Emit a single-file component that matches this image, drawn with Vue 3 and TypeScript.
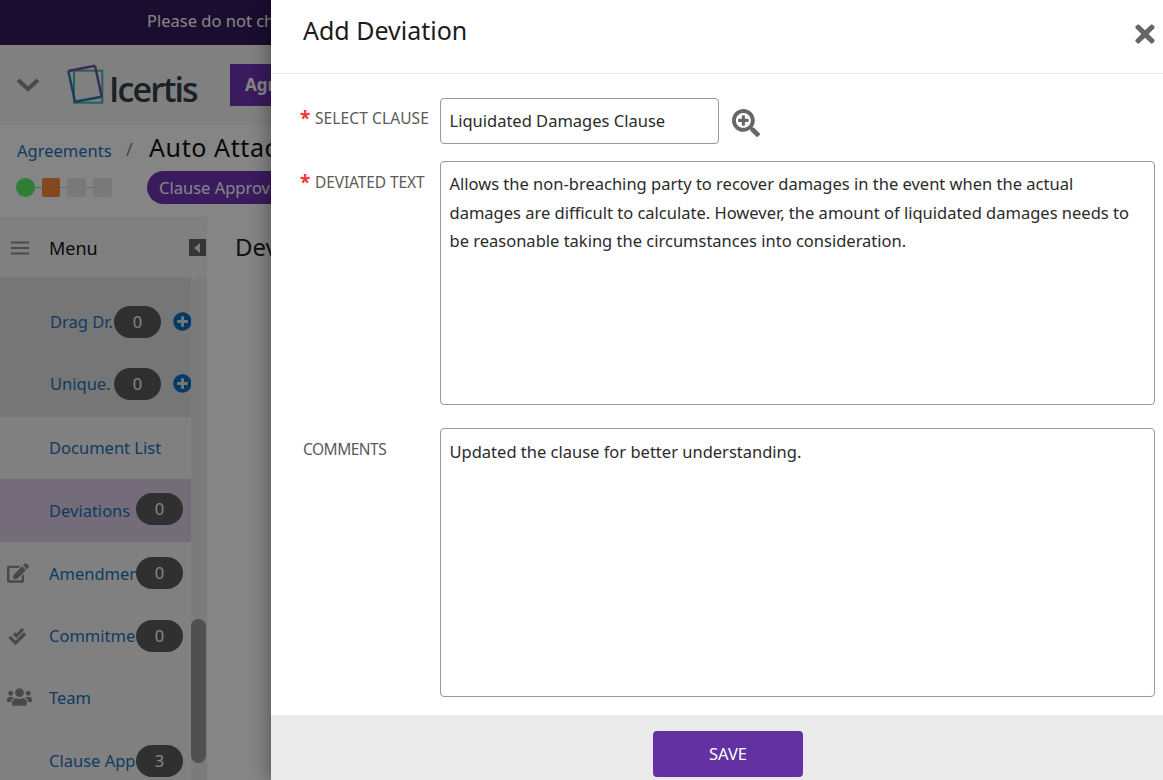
<script setup lang="ts">
import { ref } from 'vue';

interface NavItem {
  label: string;
  count?: number;
  add?: boolean;
  icon?: string;
  kind?: string;
}

const nav: NavItem[] = [
  { label: 'Drag Dr.', count: 0, add: true, kind: 'sub first' },
  { label: 'Unique.', count: 0, add: true, kind: 'sub' },
  { label: 'Document List', kind: 'plain' },
  { label: 'Deviations', count: 0, kind: 'active' },
  { label: 'Amendments', count: 0, icon: 'edit' },
  { label: 'Commitments', count: 0, icon: 'check' },
  { label: 'Team', icon: 'users', kind: 'low' },
  { label: 'Clause Approvals', count: 3 },
];

const clause = ref('Liquidated Damages Clause');
const deviated = ref(
  'Allows the non-breaching party to recover damages in the event when the actual damages are difficult to calculate. However, the amount of liquidated damages needs to be reasonable taking the circumstances into consideration.'
);
const comments = ref('Updated the clause for better understanding.');
</script>

<template>
  <div class="page">
    <div class="banner">Please do not change</div>

    <header class="topbar">
      <svg class="chevron" viewBox="0 0 24 14"><path d="M2 2l10 9 10-9" fill="none" stroke="#8f8f8f" stroke-width="4" /></svg>
      <div class="logo">
        <svg width="42" height="42" viewBox="0 0 42 42">
          <rect x="8" y="6.7" width="28.3" height="32" fill="none" stroke="#4fb3ad" stroke-width="2" />
          <path d="M2.3 7L29 1.7" fill="none" stroke="#7d4aa8" stroke-width="2.4" />
          <path d="M2.3 7L9 37.7" fill="none" stroke="#2a7ab8" stroke-width="2.4" />
          <path d="M9 37.7l26.7-5" fill="none" stroke="#2a7ab8" stroke-width="2.4" />
          <path d="M29 1.7l6.7 31" fill="none" stroke="#5a5fa8" stroke-width="2.4" />
        </svg>
        <span class="logo-text">Icertis</span>
      </div>
      <div class="tab">Agreements</div>
    </header>

    <section class="crumbs">
      <div class="crumb-row">
        <a class="crumb-link">Agreements</a>
        <span class="crumb-sep">/</span>
        <span class="crumb-title">Auto Attachment</span>
      </div>
      <div class="status-row">
        <div class="steps">
          <i class="step dot"></i><i class="bar on"></i>
          <i class="step now"></i><i class="bar"></i>
          <i class="step"></i><i class="bar"></i>
          <i class="step"></i>
        </div>
        <span class="pill">Clause Approval</span>
      </div>
    </section>

    <div class="work">
      <aside class="side">
        <div class="menu-head">
          <svg class="burger" viewBox="0 0 18 14"><path d="M0 1.5h18M0 7h18M0 12.5h18" stroke="#8a8a8a" stroke-width="2.2" /></svg>
          <span class="menu-title">Menu</span>
          <span class="collapse"><i></i></span>
        </div>
        <div class="nav-wrap">
          <ul class="nav">
            <li
              v-for="item in nav"
              :key="item.label"
              class="nav-row"
              :class="[item.kind, { 'has-count': item.count !== undefined }]"
            >
              <span class="nav-icon">
                <svg v-if="item.icon === 'edit'" width="22" height="20" viewBox="0 0 576 512"><path fill="#8c8c8c" d="M402.6 83.2l90.2 90.2c3.8 3.8 3.8 10 0 13.8L274.4 405.6l-92.8 10.3c-12.4 1.4-22.9-9.1-21.5-21.5l10.3-92.8L388.8 83.2c3.8-3.8 10-3.8 13.8 0zm162-22.9l-48.8-48.8c-15.2-15.2-39.9-15.2-55.2 0l-35.4 35.4c-3.8 3.8-3.8 10 0 13.8l90.2 90.2c3.8 3.8 10 3.8 13.8 0l35.4-35.4c15.2-15.3 15.2-40 0-55.2zM384 346.2V448H64V128h229.8c3.2 0 6.2-1.3 8.5-3.5l40-40c7.6-7.6 2.2-20.5-8.5-20.5H48C21.5 64 0 85.5 0 112v352c0 26.5 21.5 48 48 48h352c26.5 0 48-21.5 48-48V306.2c0-10.7-12.9-16-20.5-8.5l-40 40c-2.2 2.3-3.5 5.3-3.5 8.5z" /></svg>
                <svg v-else-if="item.icon === 'check'" width="20" height="20" viewBox="0 0 20 20"><path d="M2.5 11l6 6 9.5-9.5M7 7.5l2.5 2.5L16 3" fill="none" stroke="#8c8c8c" stroke-width="3.2" /></svg>
                <svg v-else-if="item.icon === 'users'" width="25" height="20" viewBox="0 0 640 512"><path fill="#8c8c8c" d="M96 224c35.3 0 64-28.7 64-64s-28.7-64-64-64-64 28.7-64 64 28.7 64 64 64zm448 0c35.3 0 64-28.7 64-64s-28.7-64-64-64-64 28.7-64 64 28.7 64 64 64zm32 32h-64c-17.6 0-33.5 7.1-45.1 18.6 40.3 22.1 68.9 62 75.1 109.4h66c17.7 0 32-14.3 32-32v-32c0-35.3-28.7-64-64-64zm-256 0c61.9 0 112-50.1 112-112S381.9 32 320 32 208 82.1 208 144s50.1 112 112 112zm76.8 32h-8.3c-20.8 10-43.9 16-68.5 16s-47.6-6-68.5-16h-8.3C179.6 288 128 339.6 128 403.2V432c0 26.5 21.5 48 48 48h288c26.5 0 48-21.5 48-48v-28.8c0-63.6-51.6-115.2-115.2-115.2zm-223.7-13.4C161.5 263.1 145.6 256 128 256H64c-35.3 0-64 28.7-64 64v32c0 17.7 14.3 32 32 32h65.9c6.3-47.4 34.9-87.3 75.2-109.4z" /></svg>
              </span>
              <span class="nav-label">{{ item.label }}</span>
              <span v-if="item.count !== undefined" class="count">{{ item.count }}</span>
              <svg v-if="item.add" class="add" viewBox="0 0 512 512"><path fill="#0a6fc2" d="M256 8C119 8 8 119 8 256s111 248 248 248 248-111 248-248S393 8 256 8zm144 276c0 6.6-5.4 12-12 12h-92v92c0 6.6-5.4 12-12 12h-56c-6.6 0-12-5.4-12-12v-92h-92c-6.6 0-12-5.4-12-12v-56c0-6.6 5.4-12 12-12h92v-92c0-6.6 5.4-12 12-12h56c6.6 0 12 5.4 12 12v92h92c6.6 0 12 5.4 12 12v56z" /></svg>
            </li>
          </ul>
          <div class="scroll"><div class="thumb"></div></div>
        </div>
      </aside>
      <main class="content">
        <div class="content-head">Deviations</div>
      </main>
    </div>

    <div class="overlay"></div>

    <div class="modal">
      <div class="modal-head">
        <h2 class="modal-title">Add Deviation</h2>
        <svg class="close" viewBox="0 0 352 512"><path fill="#666" d="M242.72 256l100.07-100.07c12.28-12.28 12.28-32.19 0-44.48l-22.24-22.24c-12.28-12.28-32.19-12.28-44.48 0L176 189.28 75.93 89.21c-12.28-12.28-32.19-12.28-44.48 0L9.21 111.45c-12.28 12.28-12.28 32.19 0 44.48L109.28 256 9.21 356.07c-12.28 12.28-12.28 32.19 0 44.48l22.24 22.24c12.28 12.28 32.2 12.28 44.48 0L176 322.72l100.07 100.07c12.28 12.28 32.2 12.28 44.48 0l22.24-22.24c12.28-12.28 12.28-32.19 0-44.48L242.72 256z" /></svg>
      </div>

      <div class="form">
        <div class="field clause-field">
          <label class="label"><span class="req">*</span>SELECT CLAUSE</label>
          <div class="control input">{{ clause }}</div>
          <svg class="lookup" viewBox="0 0 512 512"><path fill="#666" d="M304 192v32c0 6.6-5.4 12-12 12h-56v56c0 6.6-5.4 12-12 12h-32c-6.6 0-12-5.4-12-12v-56h-56c-6.6 0-12-5.4-12-12v-32c0-6.6 5.4-12 12-12h56v-56c0-6.6 5.4-12 12-12h32c6.6 0 12 5.4 12 12v56h56c6.6 0 12 5.4 12 12zm201 284.7L476.7 505c-9.4 9.4-24.6 9.4-33.9 0L343 405.3c-4.5-4.5-7-10.6-7-17V372c-35.3 27.6-79.7 44-128 44C93.1 416 0 322.9 0 208S93.1 0 208 0s208 93.1 208 208c0 48.3-16.4 92.7-44 128h16.3c6.4 0 12.5 2.5 17 7l99.7 99.7c9.3 9.4 9.3 24.6 0 34zM344 208c0-75.2-60.8-136-136-136S72 132.8 72 208s60.8 136 136 136 136-60.8 136-136z" /></svg>
        </div>
        <div class="field deviated-field">
          <label class="label"><span class="req">*</span>DEVIATED TEXT</label>
          <div class="control area tall">{{ deviated }}</div>
        </div>
        <div class="field comments-field">
          <label class="label plain">COMMENTS</label>
          <div class="control area taller">{{ comments }}</div>
        </div>
      </div>

      <div class="modal-foot">
        <button class="save" type="button">SAVE</button>
      </div>
    </div>
  </div>
</template>

<style scoped>
.page {
  position: relative;
  width: 1163px;
  height: 780px;
  overflow: hidden;
  background: #fff;
  font-family: "Noto Sans", "Open Sans", sans-serif;
}

.banner {
  height: 45px;
  box-sizing: border-box;
  padding: 9px 0 0 147px;
  background: #331a5c;
  color: #fff;
  font-size: 16.5px;
  white-space: nowrap;
}

.topbar {
  height: 80px;
  display: flex;
  align-items: center;
  background: #f5f5f5;
}

.chevron {
  width: 24px;
  height: 14px;
  margin: 0 0 0 16px;
}

.logo {
  display: flex;
  align-items: center;
  margin-left: 26px;
  width: 164px;
}

.logo svg {
  flex: none;
}

.logo-text {
  margin-left: 1px;
  margin-top: 7px;
  font-family: "Open Sans", sans-serif;
  font-size: 34px;
  font-weight: 600;
  letter-spacing: -1.9px;
  color: #33414c;
}

.tab {
  width: 140px;
  height: 42px;
  line-height: 42px;
  padding-left: 15px;
  box-sizing: border-box;
  background: #6f35b5;
  color: #fff;
  font-size: 17px;
  font-weight: 700;
}

.crumbs {
  height: 92px;
  box-sizing: border-box;
  padding-left: 17px;
  background: #fff;
}

.crumb-row {
  display: flex;
  align-items: center;
  height: 46px;
}

.crumb-link {
  width: 109px;
  margin-top: 4px;
  color: #1d72b8;
  font-size: 16.5px;
}

.crumb-sep {
  width: 23px;
  color: #888;
  font-size: 18px;
  margin-top: 2px;
}

.crumb-title {
  margin-top: -2px;
  font-size: 25px;
  letter-spacing: 0.6px;
  color: #111;
  white-space: nowrap;
}

.status-row {
  display: flex;
  align-items: center;
  height: 33px;
}

.steps {
  display: flex;
  align-items: center;
  width: 131px;
  margin-left: -1px;
}

.step {
  width: 19px;
  height: 19px;
  border-radius: 2px;
  background: #e8e8e8;
}

.step.dot {
  border-radius: 50%;
  background: #5cf068;
}

.step.now {
  width: 18px;
  background: #fb8a3f;
}

.bar {
  width: 7px;
  height: 1px;
  background: #ccc;
}

.bar.on {
  background: #5cf068;
}

.pill {
  height: 33px;
  line-height: 33px;
  padding: 0 24px 0 12px;
  border-radius: 17px;
  background: #6f35b5;
  color: #fff;
  font-size: 16.5px;
  white-space: nowrap;
}

.work {
  display: flex;
  height: 563px;
}

.side {
  width: 207px;
  flex: none;
  background: #f5f5f5;
}

.menu-head {
  height: 60px;
  display: flex;
  align-items: center;
  padding-top: 1px;
  box-sizing: border-box;
}

.burger {
  width: 18px;
  height: 14px;
  margin-left: 11px;
}

.menu-title {
  margin-left: 20px;
  font-size: 18px;
  color: #111;
}

.collapse {
  margin-left: auto;
  width: 17px;
  height: 17px;
  margin-right: 1px;
  background: #666;
  display: flex;
  align-items: center;
  justify-content: center;
}

.collapse i {
  border-style: solid;
  border-width: 5px 6px 5px 0;
  border-color: transparent #eee transparent transparent;
  margin-right: 2px;
}

.nav-wrap {
  position: relative;
  display: flex;
  height: 503px;
  overflow: hidden;
}

.nav {
  list-style: none;
  margin: 0;
  padding: 0;
  width: 191px;
  flex: none;
  overflow: hidden;
}

.nav-row {
  position: relative;
  display: flex;
  align-items: center;
  height: 62.5px;
  box-sizing: border-box;
}

.nav-row.sub {
  height: 64px;
  padding-bottom: 3px;
  background: #e3e3e3;
}

.nav-row.first.sub {
  height: 76px;
  padding: 13px 0 0;
}

.nav-row.plain {
  height: 62px;
  padding-bottom: 2px;
}

.nav-row.low {
  padding-bottom: 2px;
}

.nav-row.active {
  height: 63px;
  background: #dfd0e6;
}

.nav-icon {
  width: 49px;
  flex: none;
  display: flex;
  justify-content: flex-start;
  padding-left: 7px;
  box-sizing: border-box;
}

.nav-label {
  color: #1d72b8;
  font-size: 16.5px;
  white-space: nowrap;
}

.has-count .nav-label {
  max-width: 87px;
  overflow: hidden;
}

.sub .nav-label {
  margin-left: 1px;
}

.count {
  position: absolute;
  right: 8px;
  top: 50%;
  transform: translateY(-50%);
  width: 47px;
  height: 32px;
  line-height: 32px;
  border-radius: 16px;
  background: #5c5c5c;
  color: #fff;
  font-size: 16.5px;
  text-align: center;
}

.active .count {
  margin-top: -2px;
}

.sub .count {
  right: 30px;
  margin-top: -1px;
}

.first .count {
  top: auto;
  bottom: 15px;
  margin-top: 0;
  transform: none;
}

.add {
  position: absolute;
  right: -1px;
  width: 19px;
  height: 19px;
}

.first .add {
  bottom: 22px;
}

.scroll {
  width: 16px;
  flex: none;
  background: #ebebeb;
  border-radius: 8px 8px 0 0;
}

.thumb {
  width: 15px;
  height: 144px;
  margin-top: 342px;
  border-radius: 8px;
  background: #9a9a9a;
}

.content {
  flex: 1;
  background: #fff;
}

.content-head {
  height: 60px;
  line-height: 60px;
  padding-left: 28px;
  font-size: 24px;
  color: #222;
}

.overlay {
  position: absolute;
  inset: 0;
  background: rgba(0, 0, 0, 0.48);
}

.modal {
  position: absolute;
  top: 0;
  right: 0;
  bottom: 0;
  left: 271px;
  display: flex;
  flex-direction: column;
  background: #fff;
  box-shadow: -4px 0 16px rgba(0, 0, 0, 0.3);
}

.modal-head {
  display: flex;
  align-items: center;
  justify-content: space-between;
  height: 74px;
  flex: none;
  box-sizing: border-box;
  padding: 0 8px 14px 32px;
  border-bottom: 1px solid #e8e8e8;
}

.modal-title {
  margin: 0;
  font-size: 25px;
  font-weight: 400;
  color: #1c1c1c;
}

.close {
  width: 20px;
  height: 28px;
  margin-top: 9px;
}

.form {
  flex: 1;
  display: flex;
  flex-direction: column;
  padding: 24px 8px 0 29px;
}

.field {
  display: flex;
  align-items: flex-start;
}

.deviated-field {
  margin-top: 17px;
}

.comments-field {
  margin-top: 23px;
}

.label {
  display: flex;
  width: 140px;
  flex: none;
  padding-top: 9px;
  color: #5a5a5a;
  font-size: 15.5px;
  letter-spacing: 0.1px;
  white-space: nowrap;
}

.deviated-field .label {
  padding-top: 10px;
  letter-spacing: -0.1px;
}

.label.plain {
  padding-left: 3px;
  width: 137px;
  padding-top: 10px;
  letter-spacing: -0.5px;
}

.req {
  width: 15px;
  margin-top: 1px;
  color: #f0392f;
  font-size: 19px;
  font-weight: 700;
  line-height: 20px;
}

.control {
  box-sizing: border-box;
  border: 1px solid #999;
  border-radius: 4px;
  color: #2b2b2b;
  font-size: 16.5px;
  line-height: 28.5px;
  padding: 8px 8.5px;
}

.comments-field .control {
  padding-top: 9px;
}

.input {
  width: 279px;
  height: 46px;
}

.area {
  flex: 1;
}

.tall {
  height: 244px;
}

.taller {
  height: 269px;
}

.lookup {
  width: 28px;
  height: 28px;
  margin: 11px 0 0 13px;
}

.modal-foot {
  height: 65px;
  flex: none;
  box-sizing: border-box;
  padding: 16px 0 0 22px;
  display: flex;
  justify-content: center;
  background: #eaeaea;
}

.save {
  width: 150px;
  height: 46px;
  padding: 0 0 2px;
  border: none;
  border-radius: 4px;
  background: #6331a2;
  color: #fff;
  font-family: inherit;
  font-size: 16.5px;
}
</style>
